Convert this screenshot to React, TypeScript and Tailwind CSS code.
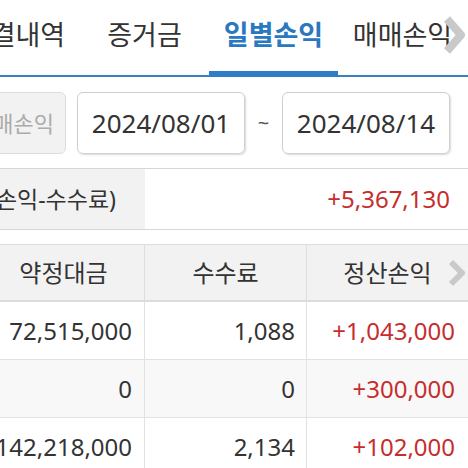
import React from 'react'

const tabs = ['체결내역', '증거금', '일별손익', '매매손익']

const rows = [
  { amount: '72,515,000', fee: '1,088', pnl: '+1,043,000' },
  { amount: '0', fee: '0', pnl: '+300,000' },
  { amount: '142,218,000', fee: '2,134', pnl: '+102,000' },
]

function Chevron({ className, w, h, sw }: { className?: string; w: number; h: number; sw: number }) {
  return (
    <svg className={className} width={w} height={h} viewBox={`0 0 ${w} ${h}`} fill="none">
      <polyline
        points={`${sw / 2},${sw / 2} ${w - sw / 2},${h / 2} ${sw / 2},${h - sw / 2}`}
        stroke="#c9c9c9"
        strokeWidth={sw}
        strokeLinejoin="round"
      />
    </svg>
  )
}

export default function App() {
  return (
    <div className="w-[468px] h-[468px] overflow-hidden bg-white relative font-['Noto_Sans','Noto_Sans_CJK_KR',sans-serif] text-[#333]">
      {/* Tabs */}
      <div className="relative h-[77px] border-b-2 border-[#3b81c0]">
        <div className="flex ml-[-49px] h-[75px]">
          {tabs.map((t) => {
            const active = t === '일별손익'
            return (
              <div
                key={t}
                className={`relative w-[129px] shrink-0 flex items-center justify-center pb-[5px] text-[27px] whitespace-nowrap ${
                  active ? 'text-[#2a78bf] font-bold' : 'text-[#333]'
                }`}
              >
                {t}
                {active && <div className="absolute left-0 right-0 bottom-[-2px] h-[6px] bg-[#2e7dc6]" />}
              </div>
            )
          })}
        </div>
        <Chevron className="absolute left-[443px] top-[15px]" w={22} h={40} sw={8} />
      </div>

      {/* Date range */}
      <div className="flex h-[62px] mt-[15px]">
        <div className="ml-[-58px] w-[124px] shrink-0 rounded-[6px] border border-[#dcdcdc] bg-[#f2f2f2] text-[#ababab] text-[22px] flex items-center justify-end pr-[11px] whitespace-nowrap">
          매매손익
        </div>
        <div className="ml-[11px] w-[168px] shrink-0 rounded-[6px] border border-[#cfcfcf] shadow-[1px_1px_2px_rgba(0,0,0,0.15)] flex items-center justify-center text-[26px] text-[#333]">
          2024/08/01
        </div>
        <div className="w-[37px] shrink-0 flex items-center justify-center text-[20px] text-[#555]">~</div>
        <div className="w-[168px] shrink-0 rounded-[6px] border border-[#cfcfcf] shadow-[1px_1px_2px_rgba(0,0,0,0.15)] flex items-center justify-center text-[26px] text-[#333]">
          2024/08/14
        </div>
      </div>

      {/* Summary */}
      <div className="flex h-[62px] mt-[14px] border-y border-[#d6d6d6]">
        <div className="w-[145px] shrink-0 bg-[#f2f2f2] overflow-hidden flex justify-end items-center pr-[29px] whitespace-nowrap text-[23px]">
          총손익(매매손익-수수료)
        </div>
        <div className="flex-1 flex justify-end items-center pr-[18px] text-[24px] text-[#c62d2d]">+5,367,130</div>
      </div>

      {/* Table */}
      <div className="relative mt-[14px] ml-[-17px] w-[485px]">
        <div className="flex h-[58px] bg-[#f2f2f2] border-t border-b-2 border-[#dcdcdc] text-[24px]">
          <div className="w-[162px] border-r border-[#dedede] flex items-center justify-center">약정대금</div>
          <div className="w-[162px] border-r border-[#dedede] flex items-center justify-center">수수료</div>
          <div className="w-[161px] flex items-center justify-center">정산손익</div>
        </div>
        <Chevron className="absolute left-[465px] top-[15px]" w={17} h={28} sw={6} />
        {rows.map((r, i) => (
          <div
            key={i}
            className={`flex h-[58px] border-b border-[#e2e2e2] text-[24px] ${i === 1 ? 'bg-[#f8f8f8]' : 'bg-white'}`}
          >
            <div className="w-[162px] border-r border-[#e2e2e2] flex items-center justify-end pr-[12px] whitespace-nowrap">
              {r.amount}
            </div>
            <div className="w-[162px] border-r border-[#e2e2e2] flex items-center justify-end pr-[11px]">{r.fee}</div>
            <div className="w-[161px] flex items-center justify-end pr-[13px] text-[#c62d2d]">{r.pnl}</div>
          </div>
        ))}
      </div>
    </div>
  )
}
